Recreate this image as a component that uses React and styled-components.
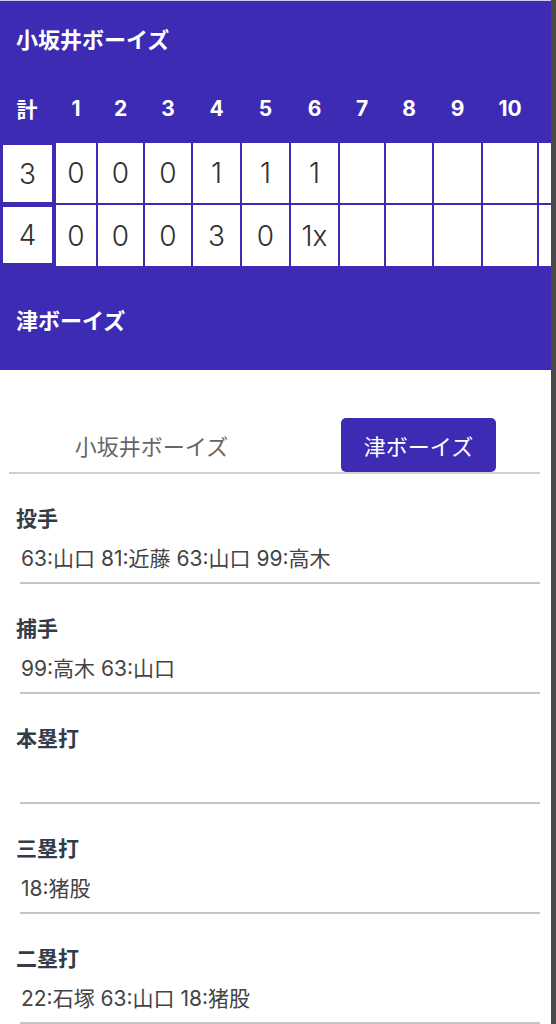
import styled, { createGlobalStyle } from 'styled-components'

const GlobalStyle = createGlobalStyle`
  html, body {
    margin: 0;
    padding: 0;
    background: #4b4b4b;
  }
  body {
    font-family: Inter, "Noto Sans CJK JP", sans-serif;
  }
`

const PURPLE = '#3d2cb3'

const Page = styled.div`
  width: 551px;
  min-height: 1024px;
  background: #fff;
`

const Header = styled.div`
  background: ${PURPLE};
  border-top: 1px solid #cfcbee;
  padding-bottom: 38px;
  overflow: hidden;
`

const TeamTitle = styled.div`
  padding: ${p => p.$top}px 16px 0;
  font-size: 22px;
  line-height: 26px;
  font-weight: 700;
  color: #fff;
  font-family: "Noto Sans CJK JP", sans-serif;
`

const InningRow = styled.div`
  display: flex;
  gap: 2px;
  margin-top: 42px;
  height: 30px;
  align-items: center;
`

const InningLabel = styled.div`
  flex: none;
  text-align: center;
  font-size: 21px;
  font-weight: 700;
  color: #fff;
  font-family: Inter, "Noto Sans CJK JP", sans-serif;
`

const ScoreTable = styled.div`
  display: flex;
  flex-direction: column;
  gap: 2px;
  margin-top: 20px;
`

const ScoreRow = styled.div`
  display: flex;
  gap: 2px;
  height: ${p => p.$h}px;
`

const TotalSlot = styled.div`
  flex: none;
  width: 54px;
  display: flex;
  padding: 2px 2px ${p => p.$bottom}px 3px;
  box-sizing: border-box;
`

const Cell = styled.div`
  flex: none;
  background: #fff;
  display: flex;
  align-items: center;
  justify-content: center;
  font-size: 28px;
  font-weight: 300;
  color: #2f2f2f;
  font-family: Inter, sans-serif;
`

const TotalCell = styled(Cell)`
  flex: 1;
`

const TabsWrap = styled.div`
  padding-top: 48px;
`

const Tabs = styled.div`
  display: flex;
  gap: 112px;
  margin: 0 11px 0 9px;
  padding-left: 65px;
  border-bottom: 2px solid #cfcfcf;
`

const Tab = styled.div`
  width: 155px;
  height: 54px;
  display: flex;
  align-items: center;
  justify-content: center;
  border-radius: 5px;
  font-size: 22px;
  font-family: "Noto Sans CJK JP", sans-serif;
  color: ${p => (p.$active ? '#fff' : '#666')};
  background: ${p => (p.$active ? PURPLE : 'transparent')};
`

const Section = styled.div`
  padding-top: 30px;
`

const Label = styled.div`
  padding-left: 16px;
  font-size: 21px;
  line-height: 26px;
  font-weight: 700;
  color: #333c48;
  font-family: "Noto Sans CJK JP", sans-serif;
`

const Value = styled.div`
  margin-top: 16px;
  padding-left: 21px;
  min-height: 26px;
  font-size: 21px;
  line-height: 26px;
  color: #444;
  font-family: Inter, "Noto Sans CJK JP", sans-serif;
`

const Divider = styled.div`
  margin: 10px 11px 0 20px;
  height: 2px;
  background: #c6c6c6;
`

const widths = [40, 45, 46, 47, 47, 47, 44, 46, 47, 54, 40]
const innings = ['1', '2', '3', '4', '5', '6', '7', '8', '9', '10', '']

const rows = [
  { total: '3', scores: ['0', '0', '0', '1', '1', '1', '', '', '', '', ''], h: 60, bottom: 1 },
  { total: '4', scores: ['0', '0', '0', '3', '0', '1x', '', '', '', '', ''], h: 61, bottom: 3 },
]

const stats = [
  { label: '投手', value: '63:山口 81:近藤 63:山口 99:高木' },
  { label: '捕手', value: '99:高木 63:山口' },
  { label: '本塁打', value: '' },
  { label: '三塁打', value: '18:猪股' },
  { label: '二塁打', value: '22:石塚 63:山口 18:猪股' },
]

export default function App() {
  return (
    <Page>
      <GlobalStyle />
      <Header>
        <TeamTitle $top={24}>小坂井ボーイズ</TeamTitle>
        <InningRow>
          <InningLabel style={{ width: 54 }}>計</InningLabel>
          {innings.map((n, i) => (
            <InningLabel key={i} style={{ width: widths[i] }}>{n}</InningLabel>
          ))}
        </InningRow>
        <ScoreTable>
          {rows.map((r, ri) => (
            <ScoreRow key={ri} $h={r.h}>
              <TotalSlot $bottom={r.bottom}>
                <TotalCell>{r.total}</TotalCell>
              </TotalSlot>
              {r.scores.map((s, i) => (
                <Cell key={i} style={{ width: widths[i] }}>{s}</Cell>
              ))}
            </ScoreRow>
          ))}
        </ScoreTable>
        <TeamTitle $top={40}>津ボーイズ</TeamTitle>
      </Header>
      <TabsWrap>
        <Tabs>
          <Tab>小坂井ボーイズ</Tab>
          <Tab $active>津ボーイズ</Tab>
        </Tabs>
      </TabsWrap>
      {stats.map(s => (
        <Section key={s.label}>
          <Label>{s.label}</Label>
          <Value>{s.value}</Value>
          <Divider />
        </Section>
      ))}
    </Page>
  )
}
